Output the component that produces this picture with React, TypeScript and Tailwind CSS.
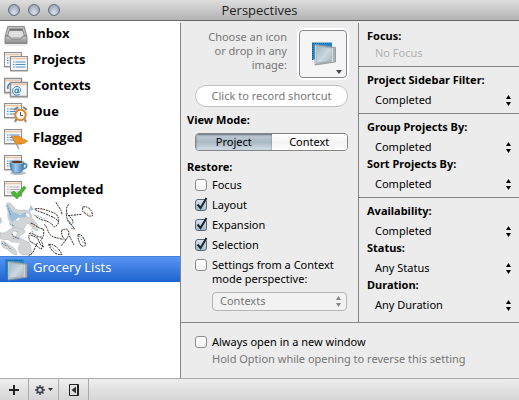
import type { ReactNode } from "react";

function Card({ x, y, children }: { x: number; y: number; children?: ReactNode }) {
  return (
    <g transform={`translate(${x} ${y})`}>
      <rect x=".5" y=".5" width="17" height="14" fill="#f5f5f5" stroke="#8f8f8f" />
      <path d="M1 2.5h16" stroke="#e9c6a6" strokeWidth="1.5" />
      <path d="M0 15.5h18" stroke="#aaa" strokeOpacity=".6" />
      {children}
    </g>
  );
}

function Lines({ color = "#4d94cf" }: { color?: string }) {
  return (
    <g stroke={color} strokeWidth="1.2">
      <path d="M3 6h1.500M3 8.500h1.500M3 11h1.500M5.500 6h10M5.500 8.500h10M5.500 11h10" />
    </g>
  );
}

function Folder() {
  return (
    <g>
      <path d="M1 .5h20v17H1z" fill="#1d87c9" />
      <path d="M1.500 1v17M2 1.500h18" stroke="#0f5c9b" strokeDasharray="1 1" />
      <path d="M4 2.500 24.500 5.500v14.500L4 23z" fill="#a9b1b6" stroke="#8b9296" strokeWidth=".8" />
      <path d="M6 4.500 20.500 6.500v12L6 20.500z" fill="url(#glass)" />
      <path d="M4.700 3.500v18.500" stroke="#e6ecef" strokeWidth=".8" />
      <path d="M21.500 6v14" stroke="#d7dcdf" strokeWidth="1.200" />
    </g>
  );
}

const icons: Record<string, ReactNode> = {
  Inbox: (
    <g>
      <path d="M3.500 1h17L23 10v2H1v-2z" fill="#8b8b8b" />
      <path d="M4.500 2h15l2.500 8H2z" fill="#c4c4c4" />
      <path d="M5.500 3.500h13l1.500 5.500H4z" fill="#757575" />
      <path d="M4 9 5.500 5.500h13L20 9v4H4z" fill="#dedede" stroke="#777" strokeWidth=".7" />
      <path d="M1 11h4l2 3h10l2-3h4v7.500H1z" fill="url(#tray)" stroke="#777" strokeWidth=".8" />
      <path d="M1 20h22" stroke="#ccc" strokeOpacity=".7" />
    </g>
  ),
  Projects: (
    <g>
      <Card x={0} y={1}><Lines /></Card>
      <Card x={6} y={5}><Lines /></Card>
    </g>
  ),
  Contexts: (
    <g fill="none" stroke="#3183c4" strokeWidth="1.5">
      <Card x={0} y={1} />
      <path d="M4 12c-1-3 1-6 4-6" />
      <Card x={6} y={5} />
      <ellipse cx="12.500" cy="14" rx="1.500" ry="2" transform="rotate(25 12.500 14)" strokeWidth="1.200" />
      <path d="M14.500 11.500 14 15.500c3 1 4-6-1-6s-6 7-2 8.500c2 .5 4 0 5-1" strokeWidth="1" />
    </g>
  ),
  Due: (
    <g>
      <Card x={0} y={0}><Lines /></Card>
      <path d="m10 7 4-3M23 7l-4-3M12.500 16l-1.500 3M20.500 16l1.500 3" stroke="#8e8175" strokeWidth="2" />
      <circle cx="16.500" cy="12" r="5.200" fill="#faf8f2" stroke="#d98631" strokeWidth="2" />
      <path d="M16.500 9v3.500H19" fill="none" stroke="#555" />
    </g>
  ),
  Flagged: (
    <g>
      <Card x={0} y={0}><Lines /></Card>
      <path d="m9 8 6 12" stroke="#aaa" strokeWidth="1.600" />
      <path d="M7.500 7c4 1 6-1 9 1 2 2 4 2.500 7 4-2 1-2.500 3-5 2.500-3-.5-4 1-6.500.5z" fill="#ef9427" stroke="#ca721b" strokeWidth=".7" />
    </g>
  ),
  Review: (
    <g>
      <Card x={0} y={0}><Lines /></Card>
      <ellipse cx="14" cy="18" rx="8" ry="2" fill="#bac2c8" />
      <path d="M19 9c5-2 5 5-1 5" fill="none" stroke="#4d8abd" strokeWidth="1.800" />
      <path d="M6 7h14c0 7-2 11-5 11h-4C8 18 6 14 6 7" fill="url(#cup)" stroke="#3d75a7" strokeWidth=".6" />
      <ellipse cx="13" cy="7" rx="6.500" ry="1.800" fill="#603b24" stroke="#a5cce8" />
    </g>
  ),
  Completed: (
    <g>
      <Card x={0} y={0}><Lines color="#b5b5b5" /></Card>
      <path d="m7 12 3-2 3 3 7-8 2 2-9 11z" fill="#45b929" stroke="#379d20" strokeWidth=".6" />
    </g>
  ),
};

function Defs() {
  return (
    <svg className="absolute size-0" aria-hidden="true">
      <defs>
        <linearGradient id="glass" x2="1" y2="1">
          <stop stopColor="#9fb7c8" />
          <stop offset=".55" stopColor="#ccd8df" />
          <stop offset="1" stopColor="#a9b5bc" />
        </linearGradient>
        <linearGradient id="tray" x2="0" y2="1">
          <stop stopColor="#c9c9c9" />
          <stop offset="1" stopColor="#898989" />
        </linearGradient>
        <linearGradient id="cup">
          <stop stopColor="#3d79b1" />
          <stop offset=".4" stopColor="#9ac8ea" />
          <stop offset="1" stopColor="#3c77ad" />
        </linearGradient>
      </defs>
    </svg>
  );
}

function DragGhost() {
  return (
    <svg viewBox="0 15 300 168" className="-mt-1 h-14 w-[100px] shrink-0" aria-hidden="true">
      <g fill="#d2d4d6" stroke="#aeb4b9" strokeWidth="1.5">
        <path fillRule="evenodd" d="M20 24c12-4 18 6 26 18 12 8 30-2 44 8 6 10 2 18 14 28 10 8 14 22 8 30-12-2-14-14-26-22-12-2-10 16-22 26-10 4-22-4-28-18-6-16-16-22-12-40zM44 58c-6 8 2 22 10 20 8-6 6-16 12-22zM72 54l8 12 12 2-6-14z" />
        <path fillRule="evenodd" d="M0 112c12 6 24-4 36-14 12-4 26 2 38 8 4 14-14 10-16 20 8 10 28 10 34 24-2 14 6 18 2 30H66c-14-10-14-26-4-34-10-8-28 0-34-10-8-6-16 4-28-6zM38 108l-2 12 12 4 6-14z" />
        <path d="M4 138c14 0 18 12 34 18 8 6 14 14 12 24-16-2-20-12-30-18-10-2-20-12-16-24zM0 66l6 12-6 8z" />
      </g>
      <path d="m24 28 14 22 24 10 14-10 4 16-24 2-20 14-8-14zM92 30l10 14-16 4z" fill="#9fc0d8" />
      <path d="M20 30 32 60M28 86l16 8M44 126l14 6M6 144l14 10" stroke="#4c8fc4" strokeWidth="3" strokeDasharray="6 3" />
      <path d="m36 116 6 16M46 126l8 4M14 144l20 20" stroke="#444" strokeWidth="2" strokeDasharray="4 3" />
      <g fill="none" stroke="#35302d" strokeWidth="3" strokeDasharray="7 2 5 3">
        <path d="M104 42c16-4 34 2 46 8 16 2 26 12 26 26 0 10-4 16-12 20-10-10-18-18-34-20-14-4-22-10-28-18M106 44c12 8 30 10 42 18 10 4 22 8 26 18" />
        <path d="M168 22c6 14 16 18 18 36M206 28c-12 14-8 30 6 40 8 8 10 16 2 22-12-8-14-22-16-36M204 62l40-4M248 36c16-4 28 8 30 26-14 6-18-6-30-12z" />
        <path d="M92 84c14 4 24 18 38 18 4 14 0 24-8 34 6 8 8 16 2 26-12-4-16-16-30-20-8-8-10-18-4-28 14 2 22 14 36 12M132 88c12 8 10 26 22 34 10 8 22 6 36 12M92 120l20 8 10 22 10 6M112 144l-14 30-12 8" />
        <path d="M186 104c-4 14 2 28 12 30 8-10 14-24 2-32zM198 134l-14 18M208 122l14 28M234 118c12-2 22 16 22 34-14 8-22-14-22-34zM146 148c14-2 30 10 40 30-16 4-32-8-40-30zM208 80l16 22-10-2" />
      </g>
      <path d="m112 62 22 10M200 68l22 34M238 122l14 26M96 108l12 20M150 152l24 20" stroke="#4b93ca" strokeWidth="3" strokeDasharray="5 5" />
      <path d="m118 40 32 8M138 92l8 20M190 104l14 2M252 50l20 12M110 128l10 16M104 92l-10 12" stroke="#c98d63" strokeWidth="3" strokeDasharray="5 5" />
    </svg>
  );
}

function Arrows({ muted = false }: { muted?: boolean }) {
  return (
    <svg viewBox="0 0 5 11" className={`pointer-events-none col-start-1 row-start-1 h-[11px] w-[5px] self-center justify-self-end ${muted ? "mr-1.5 fill-[#858585]" : "fill-black"}`} aria-hidden="true">
      <path d="M2.500 0 5 4H0zM0 7h5l-2.500 4z" />
    </svg>
  );
}

function Field({ label, value }: { label: string; value: string }) {
  return (
    <label className="block">
      <span className="block h-4 font-bold leading-4">{label}</span>
      <span className="mt-[3px] grid h-[18px]">
        <select defaultValue={value} className="col-start-1 row-start-1 w-full appearance-none bg-transparent pl-2 leading-[18px]">
          <option>{value}</option>
        </select>
        <Arrows />
      </span>
    </label>
  );
}

function Check({ label, checked = false }: { label: ReactNode; checked?: boolean }) {
  return (
    <label className="flex min-h-5 items-start">
      <span className="mt-1 grid size-3 shrink-0">
        <input
          type="checkbox"
          defaultChecked={checked}
          className="col-start-1 row-start-1 size-3 appearance-none rounded-[3px] border border-[#8c8c8c] bg-linear-to-b from-white to-[#f2f2f2] checked:border-[#53657a] checked:from-[#d9e3ec] checked:to-[#a9bdd0]"
        />
        {checked && (
          <svg viewBox="0 0 12 12" className="pointer-events-none col-start-1 row-start-1 size-3 overflow-visible" aria-hidden="true">
            <path d="m2.500 5.500 3 3.500L11.500-1" fill="none" stroke="#20252c" strokeWidth="2" />
          </svg>
        )}
      </span>
      <span className="ml-[5px] pt-[3px] leading-[14px]">{label}</span>
    </label>
  );
}

function Sidebar() {
  return (
    <nav aria-label="Perspectives" className="w-[180px] shrink-0 bg-white pt-px font-['Open_Sans','Noto_Sans',sans-serif]">
      <ul>
        {Object.keys(icons).map((name) => (
          <li key={name}>
            <button className="flex h-[26px] w-full items-start gap-[5px] pl-1 pt-[3px] text-left text-[13px] font-bold leading-4">
              <svg viewBox="0 0 24 22" className="h-[22px] w-6 shrink-0" aria-hidden="true">{icons[name]}</svg>
              {name}
            </button>
          </li>
        ))}
      </ul>
      <div className="flex h-[52px] items-start"><DragGhost /></div>
      <button className="flex h-[26px] w-full items-start gap-[5px] border-t border-[#4381d8] bg-linear-to-b from-[#5795f2] to-[#1e63cf] pl-1 pt-[2px] text-left text-[13px] leading-4 text-white">
        <svg viewBox="0 0 25 24" className="h-[22px] w-6 shrink-0" aria-hidden="true"><Folder /></svg>
        Grocery Lists
      </button>
    </nav>
  );
}

export default function App() {
  return (
    <div className="flex min-h-screen flex-col bg-[#ececec] font-['Noto_Sans','Open_Sans',sans-serif] text-[11px] text-black">
      <Defs />
      <header className="grid h-[21px] shrink-0 grid-cols-[1fr_auto_1fr] items-center border-b border-[#696969] bg-linear-to-b from-[#dedede] to-[#b3b3b3] px-2">
        <div className="flex gap-2">
          {["Close", "Minimize", "Zoom"].map((name) => (
            <button key={name} aria-label={name} className="size-3 rounded-full border border-[#626b79] bg-radial-[at_50%_75%] from-[#d9e2ee] to-[#8995a6]" />
          ))}
        </div>
        <h1 className="font-['Open_Sans','Noto_Sans',sans-serif] text-[13px] leading-4 text-[#222]">Perspectives</h1>
      </header>

      <div className="flex flex-1">
        <Sidebar />
        <main className="flex min-w-0 flex-1 flex-col pt-0.5">
          <div className="flex flex-1 flex-col border-l border-[#858585]">
            <div className="flex">
              <section className="w-[177px] shrink-0 pl-1.5 pr-[9px]">
                <div className="flex justify-end gap-2.5 pt-[5px]">
                  <p className="w-[90px] pt-0.5 text-right leading-[14px] text-[#777]">Choose an icon or drop in any image:</p>
                  <button aria-label="Choose icon" className="grid size-[52px] shrink-0 place-items-center rounded-md border-2 border-white bg-[#f5f5f5] shadow-[inset_0_0_0_1px_#858790]">
                    <svg viewBox="0 0 48 48" className="size-12" aria-hidden="true">
                      <g transform="translate(12 12)"><Folder /></g>
                      <path d="M37 40h6l-3 4z" fill="#444" />
                    </svg>
                  </button>
                </div>
                <button className="ml-2 mt-[5px] block h-[22px] w-[153px] rounded-full border border-[#c2c2c2] bg-white text-[#777]">Click to record shortcut</button>
                <h2 className="mt-[5px] font-bold leading-4">View Mode:</h2>
                <div className="ml-2 mt-[5px] grid h-[18px] w-[153px] grid-cols-2 overflow-hidden rounded border border-[#858585] leading-4">
                  <button aria-pressed="true" className="bg-linear-to-b from-[#c4cfd9] via-[#a9b8c5] to-[#d3dee7] shadow-[inset_0_1px_2px_#596b7c]">Project</button>
                  <button aria-pressed="false" className="bg-linear-to-b from-white via-[#f3f3f3] to-white">Context</button>
                </div>
                <h2 className="mt-2 font-bold leading-4">Restore:</h2>
                <div className="ml-2">
                  <Check label="Focus" />
                  <Check label="Layout" checked />
                  <Check label="Expansion" checked />
                  <Check label="Selection" checked />
                  <Check label={<>Settings from a Context<br />mode perspective:</>} />
                  <div className="ml-[17px] mt-1.5 grid h-[18px] w-[135px]">
                    <select aria-label="Context perspective" disabled className="col-start-1 row-start-1 w-full appearance-none rounded border border-[#b5b5b5] bg-[#f2f2f2] pl-[7px] text-[#777] opacity-100">
                      <option>Contexts</option>
                    </select>
                    <Arrows muted />
                  </div>
                </div>
              </section>

              <section className="min-w-0 flex-1 divide-y divide-[#858585] border-l border-[#858585]">
                <div className="px-2 pb-[5px] pt-[5px]">
                  <h2 className="font-bold leading-4">Focus:</h2>
                  <p className="mt-px pl-2 leading-4 text-[#b2b2b2]">No Focus</p>
                </div>
                <div className="px-2 pb-1 pt-[5px]">
                  <Field label="Project Sidebar Filter:" value="Completed" />
                </div>
                <div className="px-2 pb-1 pt-[5px]">
                  <Field label="Group Projects By:" value="Completed" />
                  <Field label="Sort Projects By:" value="Completed" />
                </div>
                <div className="px-2 pb-2 pt-[5px]">
                  <Field label="Availability:" value="Completed" />
                  <Field label="Status:" value="Any Status" />
                  <Field label="Duration:" value="Any Duration" />
                </div>
              </section>
            </div>
            <section className="flex-1 border-t border-[#858585] pb-2 pl-3.5 pt-[9px]">
              <Check label="Always open in a new window" />
              <p className="-mt-px pl-[17px] leading-4 text-[#777]">Hold Option while opening to reverse this setting</p>
            </section>
          </div>
        </main>
      </div>

      <footer className="flex h-[22px] shrink-0 border-t border-[#aaa] bg-linear-to-b from-[#eee] to-[#d6d6d6]">
        <button aria-label="Add perspective" className="grid w-[29px] place-items-center border-r border-[#aaa]">
          <svg viewBox="0 0 10 10" className="size-2.5"><path d="M5 0v10M0 5h10" stroke="#222" strokeWidth="2" /></svg>
        </button>
        <button aria-label="Actions" className="flex w-[30px] items-center justify-center gap-[3px] border-r border-[#aaa]">
          <svg viewBox="0 0 10 10" className="size-2.5">
            <circle cx="5" cy="5" r="2.700" fill="none" stroke="#3c4149" strokeWidth="1.700" />
            <path d="M5 0v2M5 8v2M0 5h2M8 5h2M1.500 1.500 3 3M7 7l1.500 1.500M8.500 1.500 7 3M3 7 1.500 8.500" stroke="#3c4149" strokeWidth="1.500" />
          </svg>
          <svg viewBox="0 0 5 3" className="h-[3px] w-[5px]"><path d="M0 0h5L2.500 3z" fill="#333" /></svg>
        </button>
        <button aria-label="Toggle sidebar" className="grid w-[30px] place-items-center border-r border-[#aaa]">
          <svg viewBox="0 0 10 12" className="h-3 w-2.5">
            <path d="M.5.5h9v11h-9z" fill="none" stroke="#222" />
            <path d="M7 2.500v7L2.500 6z" fill="#333" /><path d="M8.500 1v10" stroke="#222" />
          </svg>
        </button>
      </footer>
    </div>
  );
}
